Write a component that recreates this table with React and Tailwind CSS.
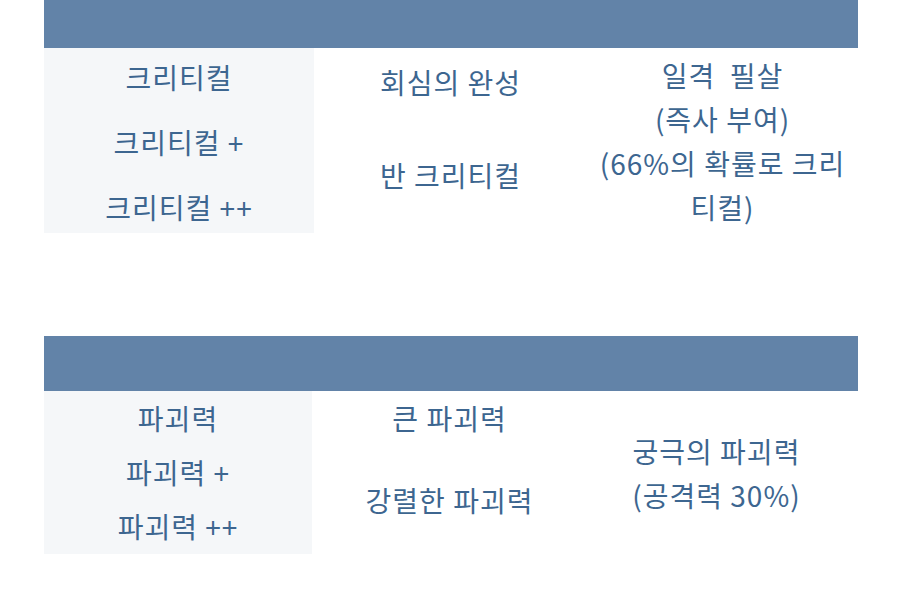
export default function App() {
  const font = { fontFamily: '"Noto Sans CJK KR", "Noto Sans", sans-serif' }
  return (
    <div className="w-[900px] h-[593px] bg-white overflow-hidden text-[#3d6690] text-[28px] tracking-[1px] leading-[44px]" style={font}>
      {/* critical table */}
      <div className="ml-[44px] w-[814px]">
        <div className="h-[48px] bg-[#6283a8]" />
        <div className="grid grid-cols-[270px_273px_271px] h-[185px]">
          <div className="bg-[#f5f7f9] flex flex-col items-center gap-[21px] pt-[7px]">
            <p>크리티컬</p>
            <p>크리티컬 +</p>
            <p>크리티컬 ++</p>
          </div>
          <div className="flex flex-col items-center gap-[49px] pt-[12px]">
            <p>회심의 완성</p>
            <p>반 크리티컬</p>
          </div>
          <div className="flex flex-col justify-center items-center text-center px-2">
            <p>일격&nbsp; 필살<br />(즉사 부여)<br />(66%의 확률로 크리티컬)</p>
          </div>
        </div>
      </div>

      {/* destruction table */}
      <div className="ml-[44px] w-[814px] mt-[103px]">
        <div className="h-[55px] bg-[#6283a8]" />
        <div className="grid grid-cols-[268px_275px_271px] h-[163px]">
          <div className="bg-[#f5f7f9] flex flex-col items-center gap-[10px] pt-[5px]">
            <p>파괴력</p>
            <p>파괴력 +</p>
            <p>파괴력 ++</p>
          </div>
          <div className="flex flex-col items-center gap-[38px] pt-[5px]">
            <p>큰 파괴력</p>
            <p>강렬한 파괴력</p>
          </div>
          <div className="flex flex-col justify-center items-center text-center pr-3">
            <p>궁극의 파괴력<br />(공격력 30%)</p>
          </div>
        </div>
      </div>
    </div>
  )
}
